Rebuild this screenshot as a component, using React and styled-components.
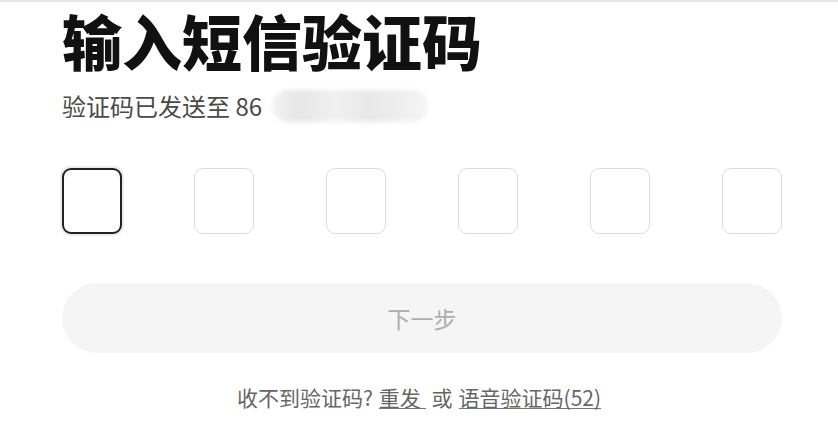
import styled, { createGlobalStyle } from 'styled-components';

const GlobalStyle = createGlobalStyle`
  html, body {
    margin: 0;
    padding: 0;
    background: #fff;
    font-family: "Noto Sans CJK SC", "Noto Sans", sans-serif;
  }
`;

const Page = styled.div`
  border-top: 2px solid #e6e6e6;
  padding: 2px 56px 0 62px;
  width: 720px;
`;

const Title = styled.h1`
  margin: 0;
  font-size: 60px;
  line-height: 72px;
  font-weight: 900;
  color: #111;
  white-space: nowrap;
`;

const Sub = styled.div`
  display: flex;
  align-items: center;
  margin-top: 13px;
  font-size: 24px;
  line-height: 34px;
  color: #4a4a4a;
`;

const Masked = styled.span`
  display: inline-block;
  width: 156px;
  height: 32px;
  margin-left: 10px;
  border-radius: 16px;
  background: linear-gradient(90deg, #f3f3f3 0%, #e6e6e6 18%, #f1f1f1 40%, #e8e8e8 62%, #f0f0f0 85%, #f5f5f5 100%);
  filter: blur(2px);
`;

const Codes = styled.div`
  display: flex;
  justify-content: space-between;
  margin-top: 45px;
`;

const CodeBox = styled.div`
  width: 60px;
  height: 66px;
  box-sizing: border-box;
  border-radius: 9px;
  border: ${(p) => (p.$active ? '2px solid #222' : '1px solid #dcdcdc')};
  box-shadow: ${(p) => (p.$active ? '0 0 0 2px #ececec' : 'none')};
  background: #fff;
`;

const NextButton = styled.button`
  display: block;
  width: 100%;
  height: 70px;
  margin-top: 49px;
  border: none;
  border-radius: 35px;
  background: #f5f5f5;
  color: #adadad;
  font-family: inherit;
  font-size: 23px;
`;

const Help = styled.div`
  margin-top: 31px;
  text-align: center;
  font-size: 21px;
  line-height: 26px;
  color: #666;
`;

const Link = styled.span`
  display: inline-block;
  color: #666;
  line-height: 22px;
  border-bottom: 1px solid #777;
  margin: 0 6px;
  cursor: pointer;
`;

export default function App() {
  return (
    <>
      <GlobalStyle />
      <Page>
        <Title>输入短信验证码</Title>
        <Sub>
          验证码已发送至 86
          <Masked />
        </Sub>
        <Codes>
          {[0, 1, 2, 3, 4, 5].map((i) => (
            <CodeBox key={i} $active={i === 0} />
          ))}
        </Codes>
        <NextButton disabled>下一步</NextButton>
        <Help>
          收不到验证码?<Link>重发&nbsp;</Link>或<Link>语音验证码(52)</Link>
        </Help>
      </Page>
    </>
  );
}
